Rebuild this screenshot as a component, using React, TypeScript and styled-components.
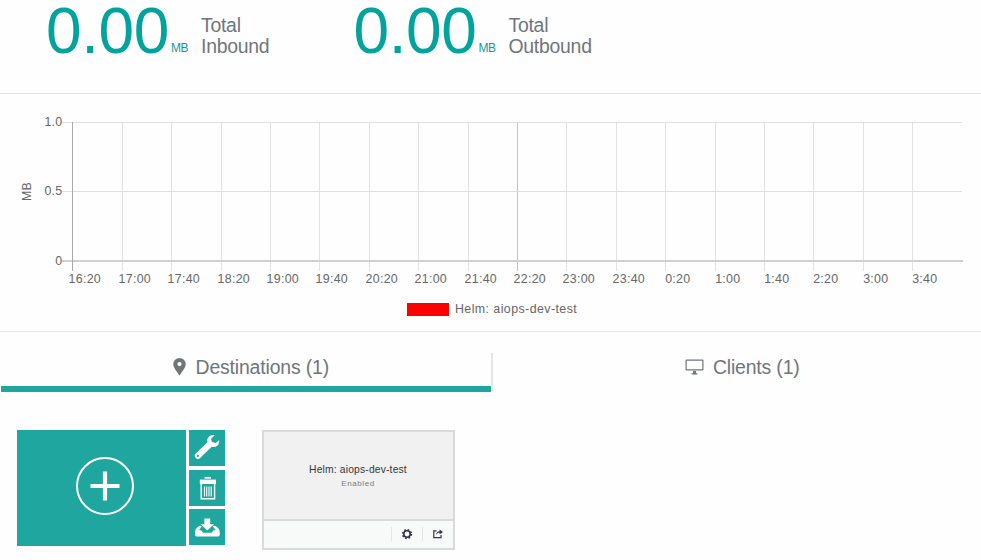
import React from "react";
import styled, { createGlobalStyle } from "styled-components";

const TEAL = "#1fa69f";

const GlobalStyle = createGlobalStyle`
  * { box-sizing: border-box; }
  body {
    margin: 0;
    background: #fefefe;
    font-family: "Liberation Sans", Arial, sans-serif;
    color: #6e767c;
  }
`;

const Page = styled.main`
  width: 981px;
  height: 560px;
  overflow: hidden;
`;

const Totals = styled.header`
  display: flex;
  height: 94px;
  padding-left: 46px;
  border-bottom: 1px solid #e3e3e3;
`;

const Total = styled.section`
  display: flex;
  width: 307.5px;
`;

const Amount = styled.span`
  width: 125px;
  height: 74px;
  font-size: 64px;
  line-height: 62px;
  letter-spacing: -0.4px;
  color: #00a49c;
`;

const Unit = styled.span`
  width: 30px;
  padding-top: 41px;
  font-size: 12px;
  line-height: 15px;
  letter-spacing: -0.4px;
  color: #149a94;
`;

const TotalLabel = styled.span`
  padding-top: 15px;
  font-size: 19.4px;
  line-height: 21px;
  letter-spacing: -0.25px;
`;

const ChartPanel = styled.section`
  height: 238px;
  border-bottom: 1px solid #e6e6e6;
`;

const Chart = styled.svg`
  display: block;
  font-size: 12.4px;
  fill: #666;
  text {
    letter-spacing: 0.3px;
  }
`;

const Tabs = styled.nav`
  display: flex;
  height: 60px;
  padding: 21px 0 0 1px;
`;

const Tab = styled.div<{ $active?: boolean }>`
  display: flex;
  align-items: center;
  justify-content: center;
  width: ${(p) => (p.$active ? 490 : 489)}px;
  height: 39px;
  padding-bottom: ${(p) => (p.$active ? 5 : 11)}px;
  border-bottom: ${(p) => (p.$active ? `6px solid ${TEAL}` : "0")};
  padding-left: ${(p) => (p.$active ? 10 : 11)}px;
  font-size: 19.4px;
  line-height: 28px;
  letter-spacing: -0.15px;
`;

const TabDivider = styled.div`
  width: 2px;
  height: 38px;
  background: #e6e6e6;
`;

const TabIcon = styled.svg<{ $gap: number }>`
  flex: none;
  margin-right: ${(p) => p.$gap}px;
`;

const Tiles = styled.section`
  display: flex;
  padding: 38px 0 0 17px;
`;

const AddTile = styled.button`
  display: flex;
  align-items: center;
  justify-content: center;
  width: 168.5px;
  height: 115.6px;
  padding: 0 0 4px 8px;
  border: 0;
  background: ${TEAL};
`;

const ToolColumn = styled.div`
  display: grid;
  grid-template-rows: repeat(3, 36.3px);
  gap: 3.3px;
  width: 36px;
  margin: 0 36.5px 0 3.5px;
`;

const ToolButton = styled.button`
  display: block;
  padding: 0;
  border: 0;
  background: ${TEAL};
  svg {
    display: block;
  }
`;

const Card = styled.article`
  width: 193px;
  height: 119.5px;
  border: 2px solid #d9dbdb;
  background: #f1f1f1;
`;

const CardBody = styled.div`
  height: 89px;
  padding-top: 31px;
  border-bottom: 2px solid #d9dbdb;
  text-align: center;
`;

const CardTitle = styled.div`
  font-size: 10.3px;
  line-height: 14px;
  letter-spacing: 0.17px;
  color: #33383c;
`;

const CardStatus = styled.div`
  font-size: 8px;
  line-height: 13px;
  letter-spacing: 0.6px;
  color: #747d82;
`;

const CardActions = styled.footer`
  display: flex;
  align-items: center;
  justify-content: flex-end;
  height: 26.5px;
  background: #f8faf9;
`;

const CardAction = styled.span`
  display: flex;
  align-items: center;
  justify-content: center;
  width: 31px;
  height: 14px;
  border-left: 1px solid #e3e5e5;
`;

const times = [
  "16:20", "17:00", "17:40", "18:20", "19:00", "19:40", "20:20", "21:00", "21:40",
  "22:20", "23:00", "23:40", "0:20", "1:00", "1:40", "2:20", "3:00", "3:40",
];
const lineXs = [72, 122, 171, 221, 270, 319, 369, 418, 468, 517, 566, 616, 665, 715, 764, 813, 863, 912];

function TrafficChart() {
  return (
    <ChartPanel>
      <Chart width="981" height="237" viewBox="0 94 981 237">
        <g shapeRendering="crispEdges">
          {lineXs.slice(1).map((x) => (
            <rect key={x} x={x} y="122" width="1" height="149" fill={x === 517 ? "#c4c4c4" : "#e2e2e2"} />
          ))}
          <rect x="62" y="122" width="900" height="1" fill="#e1e1e1" />
          <rect x="62" y="191" width="900" height="1" fill="#dedede" />
          <rect x="62" y="260" width="901" height="2" fill="#d0d0d0" />
          <rect x="72" y="122" width="1" height="149" fill="#a9a9a9" />
          <rect x="407" y="303" width="42" height="13" fill="#ff0000" />
        </g>
        <text x="62.5" y="126" textAnchor="end">1.0</text>
        <text x="62.5" y="195" textAnchor="end">0.5</text>
        <text x="62.5" y="265" textAnchor="end">0</text>
        <text textAnchor="middle" transform="translate(31 191.5) rotate(-90)">MB</text>
        {times.map((t, i) => (
          <text key={t} x={lineXs[i] + 12.8} y="282.5" textAnchor="middle">{t}</text>
        ))}
        <text x="455" y="313" textLength="122">Helm: aiops-dev-test</text>
      </Chart>
    </ChartPanel>
  );
}

export default function App() {
  return (
    <Page>
      <GlobalStyle />
      <Totals>
        {["Inbound", "Outbound"].map((direction) => (
          <Total key={direction}>
            <Amount>0.00</Amount>
            <Unit>MB</Unit>
            <TotalLabel>Total<br />{direction}</TotalLabel>
          </Total>
        ))}
      </Totals>

      <TrafficChart />

      <Tabs>
        <Tab $active>
          <TabIcon $gap={10} width="13" height="18" viewBox="0 0 13 18" fill="#6e767c">
            <path fillRule="evenodd" d="M6.5 0A6.2 6.2 0 0 0 .3 6.2C.3 9.5 3.5 13 6.5 17.5 9.5 13 12.7 9.5 12.7 6.2A6.2 6.2 0 0 0 6.5 0Zm0 4a2.1 2.1 0 1 1 0 4.2 2.1 2.1 0 0 1 0-4.2Z" />
          </TabIcon>
          Destinations (1)
        </Tab>
        <TabDivider />
        <Tab>
          <TabIcon $gap={9} width="19" height="16" viewBox="0 0 19 16" fill="#6e767c">
            <path fillRule="evenodd" d="M1.5.5h16a1 1 0 0 1 1 1v9a1 1 0 0 1-1 1h-16a1 1 0 0 1-1-1v-9a1 1 0 0 1 1-1Zm.2 1.2v8.6h15.6V1.7ZM8 12h3v2l1.5.5v.9h-6v-.9L8 14Z" />
          </TabIcon>
          Clients (1)
        </Tab>
      </Tabs>

      <Tiles>
        <AddTile aria-label="Add destination">
          <svg width="60" height="60" viewBox="0 0 60 60" fill="none" stroke="#fff">
            <circle cx="30" cy="30" r="28" strokeWidth="2" />
            <path d="M15.5 30h29M30 15.5v29" strokeWidth="4.2" />
          </svg>
        </AddTile>
        <ToolColumn>
          <ToolButton aria-label="Configure">
            <svg width="36" height="36" viewBox="0 0 36 36" fill="#fff">
              <path fillRule="evenodd" d="M25.8 5.2C21 4.3 17.2 8 18.5 12.3L6.8 23.5a3.1 3.1 0 0 0 4.4 4.5L22.7 16.7c4 1.3 8-1.5 7.5-6.7l-3.5 3-3.8-1-.9-3.3ZM8.9 24.8a1.1 1.1 0 1 1 0 2.2 1.1 1.1 0 0 1 0-2.2Z" />
            </svg>
          </ToolButton>
          <ToolButton aria-label="Delete">
            <svg width="36" height="36" viewBox="0 0 36 36" fill="none" stroke="#fff">
              <path d="M15.5 7.8h6.5" strokeWidth="1.8" />
              <path d="M10.8 9.6h16.2v4.4H10.8Z" fill="#fff" stroke="none" />
              <path d="M12.2 14v14.7h13.4V14" strokeWidth="1.4" />
              <path d="M15.5 16.5v10M17.7 16.5v10M20 16.5v10M22.2 16.5v10" strokeWidth="1.1" />
            </svg>
          </ToolButton>
          <ToolButton aria-label="Import">
            <svg width="36" height="36" viewBox="0 0 36 36" fill="#fff">
              <path d="M15.4 9.5h5.8v5.7h3.7L18.3 21.5l-6.6-6.3h3.7Z" />
              <path d="M10.6 16.7C8.5 18 6 20 6 22.5v3.3q0 1.7 1.7 1.7h21.3q1.7 0 1.7-1.7v-3.3c0-2.5-2.5-4.5-4.7-5.8l-2.3.2 2.8 4.1-2.2.4-1.6 2.4h-8.8l-1.6-2.4-2.2-.4 2.8-4.1Z" />
            </svg>
          </ToolButton>
        </ToolColumn>
        <Card>
          <CardBody>
            <CardTitle>Helm: aiops-dev-test</CardTitle>
            <CardStatus>Enabled</CardStatus>
          </CardBody>
          <CardActions>
            <CardAction>
              <svg width="12" height="12" viewBox="0 0 12 12" fill="none" stroke="#303747">
                <circle cx="6" cy="6" r="3.2" strokeWidth="1.6" />
                <circle cx="6" cy="6" r="4.4" strokeWidth="1.5" strokeDasharray="1.73 1.73" />
              </svg>
            </CardAction>
            <CardAction>
              <svg width="12" height="12" viewBox="0 0 12 12" fill="none" stroke="#303747">
                <path d="M4.5 2.8H1.8v6.9h7.2V7" strokeWidth="1.2" />
                <path d="M4 7.2C4 4.5 5.6 3.2 7.6 3.2V1.5L11 4 7.6 6.5V4.8C6 4.8 4.8 5.4 4 7.2Z" fill="#303747" stroke="none" />
              </svg>
            </CardAction>
          </CardActions>
        </Card>
      </Tiles>
    </Page>
  );
}
